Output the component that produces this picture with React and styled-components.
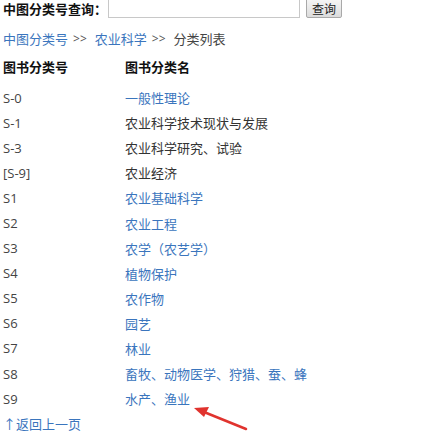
import React from 'react'
import styled, { createGlobalStyle } from 'styled-components'

const GlobalStyle = createGlobalStyle`
  html, body {
    margin: 0;
    padding: 0;
    background: #fff;
  }
  body {
    font-family: "Noto Sans CJK SC", "Open Sans", sans-serif;
    font-size: 13px;
    color: #333;
  }
`

const Page = styled.div`
  width: 439px;
  height: 432px;
  overflow: hidden;
  padding: 0 0 0 3px;
  box-sizing: border-box;
  position: relative;
`

const SearchBar = styled.div`
  display: flex;
  align-items: center;
  margin-top: -3px;
  height: 22px;
`

const SearchLabel = styled.span`
  font-weight: bold;
  color: #111;
  width: 105px;
  white-space: nowrap;
`

const SearchInput = styled.div`
  width: 190px;
  height: 18px;
  border: 1px solid #c8c8c8;
  background: #fff;
`

const SearchButton = styled.div`
  margin-left: 6px;
  width: 34px;
  height: 18px;
  border: 1px solid #a9a9a9;
  border-radius: 2px;
  background: linear-gradient(#f6f6f6, #dcdcdc);
  color: #222;
  font-size: 12px;
  display: flex;
  align-items: center;
  justify-content: center;
`

const Crumbs = styled.div`
  margin-top: 9px;
  height: 20px;
  display: flex;
  align-items: center;
  color: #444;
`

const Link = styled.span`
  color: ${p => (p.$plain ? '#333' : '#3a75bd')};
`

const Sep = styled.span`
  margin: 0 8px 0 5px;
  font-family: "Open Sans", sans-serif;
  font-size: 12px;
  color: #555;
`

const Table = styled.div`
  display: grid;
  grid-template-columns: 122px 1fr;
  grid-template-rows: 34px;
  grid-auto-rows: 25.1px;
  align-items: center;
  margin-top: 3px;
`

const HeadCell = styled.div`
  font-weight: bold;
  color: #111;
  align-self: start;
  height: 30px;
  display: flex;
  align-items: center;
`

const Code = styled.div`
  font-family: "Open Sans", "Noto Sans CJK SC", sans-serif;
  color: #444;
  font-size: 13px;
`

const Back = styled.div`
  color: #3a75bd;
  height: 25px;
  display: flex;
  align-items: center;
`

const Arrow = styled.svg`
  position: absolute;
  left: 190px;
  top: 402px;
`

const rows = [
  ['S-0', '一般性理论', true],
  ['S-1', '农业科学技术现状与发展', false],
  ['S-3', '农业科学研究、试验', false],
  ['[S-9]', '农业经济', false],
  ['S1', '农业基础科学', true],
  ['S2', '农业工程', true],
  ['S3', '农学（农艺学）', true],
  ['S4', '植物保护', true],
  ['S5', '农作物', true],
  ['S6', '园艺', true],
  ['S7', '林业', true],
  ['S8', '畜牧、动物医学、狩猎、蚕、蜂', true],
  ['S9', '水产、渔业', true],
]

export default function App() {
  return (
    <>
      <GlobalStyle />
      <Page>
        <SearchBar>
          <SearchLabel>中图分类号查询：</SearchLabel>
          <SearchInput />
          <SearchButton>查询</SearchButton>
        </SearchBar>
        <Crumbs>
          <Link>中图分类号</Link>
          <Sep>&gt;&gt;</Sep>
          <Link>农业科学</Link>
          <Sep>&gt;&gt;</Sep>
          <span>分类列表</span>
        </Crumbs>
        <Table>
          <HeadCell>图书分类号</HeadCell>
          <HeadCell>图书分类名</HeadCell>
          {rows.map(([code, name, link]) => (
            <React.Fragment key={code}>
              <Code>{code}</Code>
              <Link $plain={!link}>{name}</Link>
            </React.Fragment>
          ))}
        </Table>
        <Back>↑返回上一页</Back>
        <Arrow width="60" height="32" viewBox="0 0 60 32">
          <line x1="56" y1="27" x2="14" y2="10" stroke="#e0332e" strokeWidth="2.5" strokeLinecap="round" />
          <polygon points="4,6 19,5 14,15" fill="#e0332e" />
        </Arrow>
      </Page>
    </>
  )
}
